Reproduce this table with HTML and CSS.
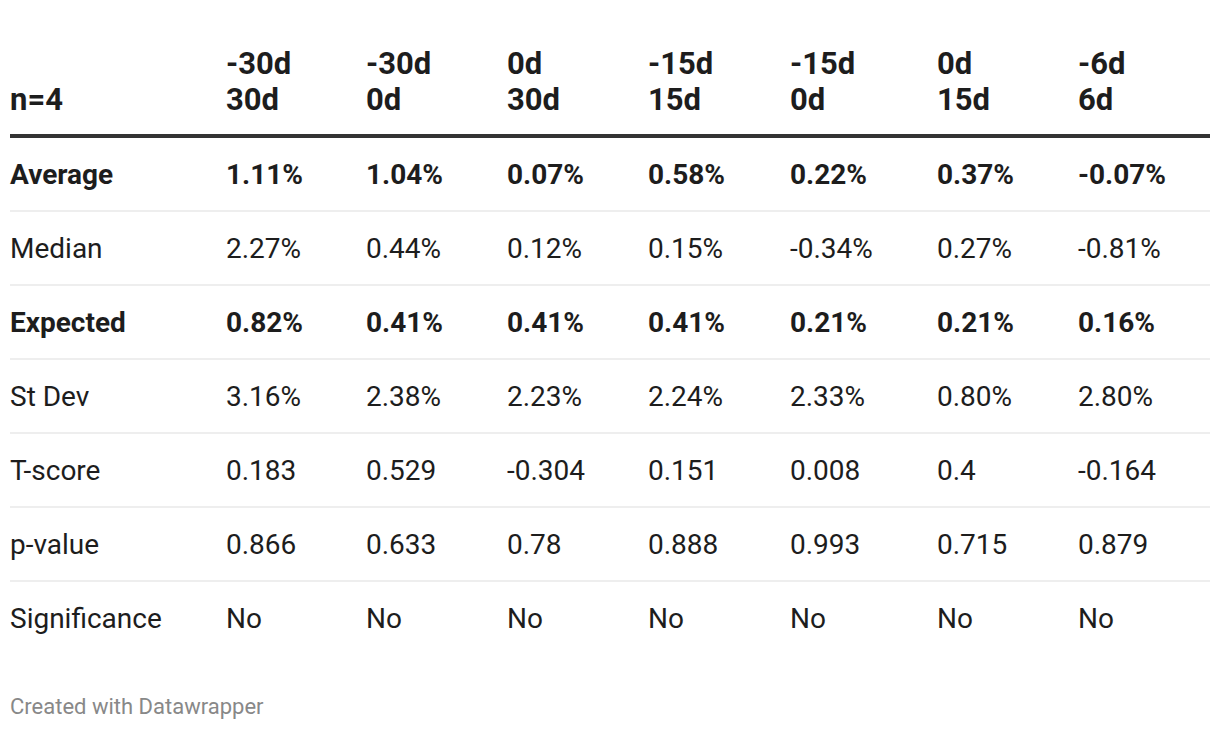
FILE: index.html
```html
<!DOCTYPE html>
<html>
<head>
<meta charset="utf-8">
<link rel="stylesheet" href="styles.css">
</head>
<body>
<div class="chart">
  <table class="data">
    <colgroup>
      <col class="c-label">
      <col class="c-a">
      <col class="c-b">
      <col class="c-b">
      <col class="c-c">
      <col class="c-d">
      <col class="c-a2">
      <col class="c-last">
    </colgroup>
    <thead>
      <tr>
        <th>n=4</th>
        <th>-30d<br>30d</th>
        <th>-30d<br>0d</th>
        <th>0d<br>30d</th>
        <th>-15d<br>15d</th>
        <th>-15d<br>0d</th>
        <th>0d<br>15d</th>
        <th>-6d<br>6d</th>
      </tr>
    </thead>
    <tbody>
      <tr class="bold">
        <td>Average</td><td>1.11%</td><td>1.04%</td><td>0.07%</td><td>0.58%</td><td>0.22%</td><td>0.37%</td><td>-0.07%</td>
      </tr>
      <tr>
        <td>Median</td><td>2.27%</td><td>0.44%</td><td>0.12%</td><td>0.15%</td><td>-0.34%</td><td>0.27%</td><td>-0.81%</td>
      </tr>
      <tr class="bold">
        <td>Expected</td><td>0.82%</td><td>0.41%</td><td>0.41%</td><td>0.41%</td><td>0.21%</td><td>0.21%</td><td>0.16%</td>
      </tr>
      <tr>
        <td>St Dev</td><td>3.16%</td><td>2.38%</td><td>2.23%</td><td>2.24%</td><td>2.33%</td><td>0.80%</td><td>2.80%</td>
      </tr>
      <tr>
        <td>T-score</td><td>0.183</td><td>0.529</td><td>-0.304</td><td>0.151</td><td>0.008</td><td>0.4</td><td>-0.164</td>
      </tr>
      <tr>
        <td>p-value</td><td>0.866</td><td>0.633</td><td>0.78</td><td>0.888</td><td>0.993</td><td>0.715</td><td>0.879</td>
      </tr>
      <tr>
        <td>Significance</td><td>No</td><td>No</td><td>No</td><td>No</td><td>No</td><td>No</td><td>No</td>
      </tr>
    </tbody>
  </table>
  <div class="footer">Created with Datawrapper</div>
</div>
</body>
</html>
```
FILE: styles.css
```css
html, body {
  margin: 0;
  padding: 0;
  background: #ffffff;
}
body {
  font-family: Roboto, "Liberation Sans", sans-serif;
  color: #1d1d1d;
}
.chart {
  padding: 30px 10px 0 10px;
}
.data {
  width: 1200px;
  border-collapse: collapse;
  table-layout: fixed;
}
.c-label { width: 216px; }
.c-a { width: 140px; }
.c-b { width: 141px; }
.c-c { width: 142px; }
.c-d { width: 147px; }
.c-a2 { width: 141px; }
.c-last { width: 132px; }

.data th {
  font-size: 31px;
  line-height: 36px;
  font-weight: 700;
  text-align: left;
  vertical-align: bottom;
  padding: 16px 0 16px 0;
  border-bottom: 4px solid #333333;
}
.data td {
  font-size: 28px;
  line-height: 32px;
  font-weight: 400;
  text-align: left;
  padding: 21px 0 19px 0;
  border-bottom: 2px solid #eeeeee;
}
.data tbody tr:last-child td {
  border-bottom: none;
}
.data tr.bold td {
  font-weight: 700;
}
.footer {
  margin-top: 40px;
  font-size: 22px;
  line-height: 26px;
  color: #888888;
}
```
